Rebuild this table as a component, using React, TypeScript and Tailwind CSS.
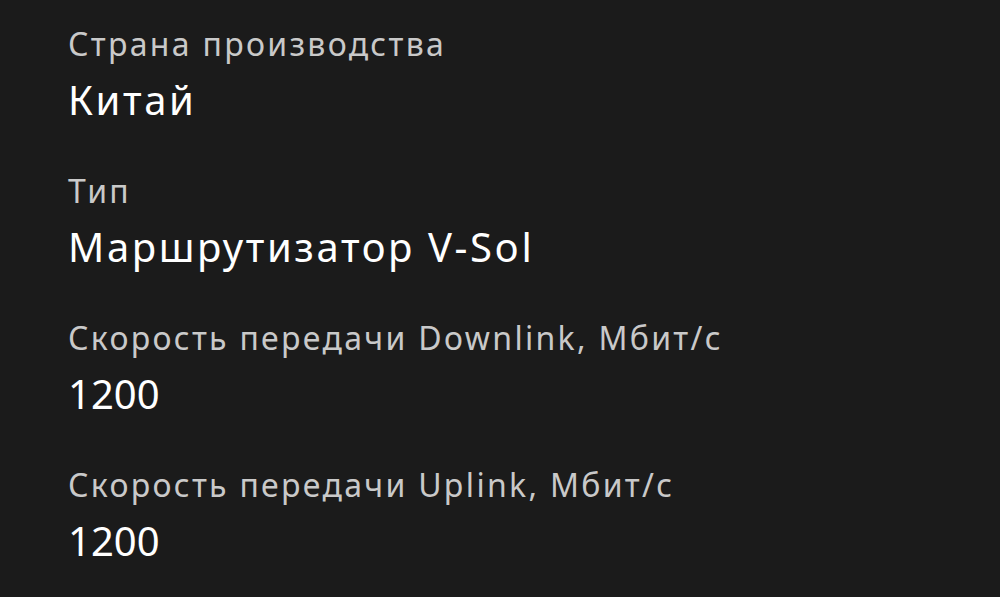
export default function App() {
  const rows = [
    ["Страна производства", "Китай", false],
    ["Тип", "Маршрутизатор V-Sol", false],
    ["Скорость передачи Downlink, Мбит/с", "1200", true],
    ["Скорость передачи Uplink, Мбит/с", "1200", true],
  ] as const;
  return (
    <div
      className="w-[1000px] h-[597px] overflow-hidden bg-[#1b1b1b] pl-[68px] pt-[24px] flex flex-col gap-[46px]"
      style={{ fontFamily: '"Noto Sans", "Open Sans", sans-serif' }}
    >
      {rows.map(([label, value, num]) => (
        <div key={label} className="flex flex-col">
          <div className="text-[32px] leading-[40px] tracking-[2.3px] text-[#c9c9c9] whitespace-nowrap">{label}</div>
          <div
            className={
              num
                ? "mt-[11px] text-[40px] leading-[50px] tracking-[0px] text-white whitespace-nowrap"
                : "mt-[11px] text-[40px] leading-[50px] tracking-[2.6px] text-white whitespace-nowrap"
            }
          >
            {value}
          </div>
        </div>
      ))}
    </div>
  );
}
